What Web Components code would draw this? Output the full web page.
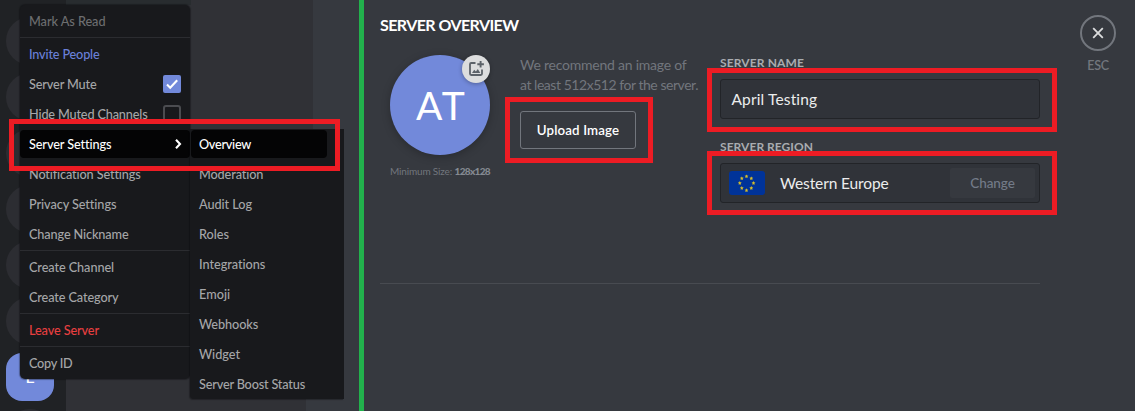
<!DOCTYPE html>
<html lang="en">
<head>
<meta charset="utf-8">
<title>Server Overview</title>
<style>
html, body { margin: 0; height: 411px; overflow: hidden; background: #36393f; font-family: Lato, "Open Sans", sans-serif; }
</style>
</head>
<body>
<server-app></server-app>
<script>
const define = (name, html, setup) => {
  const template = document.createElement('template');
  template.innerHTML = html;
  customElements.define(name, class extends HTMLElement {
    constructor() {
      super();
      this.attachShadow({ mode: 'open' }).append(template.content.cloneNode(true));
    }
    connectedCallback() { if (setup) setup(this, this.shadowRoot); }
  });
};

// A single line of text, tracked so that it fills the width given in "w".
define('fit-text', `
<style>:host{display:inline-block;white-space:nowrap;vertical-align:top}span{display:inline-block}</style>
<span><slot></slot></span>`, (el, root) => {
  const target = parseFloat(el.getAttribute('w'));
  const span = root.querySelector('span');
  span.style.letterSpacing = '0px';
  const width = span.getBoundingClientRect().width;
  if (target && width) span.style.letterSpacing = ((target - width) / el.textContent.length).toFixed(3) + 'px';
});

define('menu-row', `
<style>
:host{display:flex;flex:none;align-items:center;justify-content:space-between;box-sizing:border-box;height:28px;margin:1px 0;padding:0 9px;border-radius:4px;font-size:12.7px;font-weight:500;line-height:28px;color:#a5a6a8}
:host([muted]){color:#6d6e70}
:host([accent]){color:#6a80d8}
:host([danger]){color:#e73f40}
:host([active]){background:#040405;color:#fff}
</style>
<slot></slot><slot name="end"></slot>`);

define('menu-line', `<style>:host{display:block;flex:none;height:1px;margin:1px 0;background:#2b2c30}</style>`);

define('check-box', `
<style>
:host{display:block;width:18px;height:18px;box-sizing:border-box;border:2px solid #4b4c50;border-radius:3px}
:host([checked]){border:0;background:#7289da;border-radius:2px}
svg{display:none}
:host([checked]) svg{display:block}
</style>
<svg width="18" height="18" viewBox="0 0 18 18"><path d="M4 9.6l3.2 3.2 7-7.6" fill="none" stroke="#fff" stroke-width="2.1"/></svg>`);

define('context-menu', `
<style>
:host{display:flex;flex-direction:column;box-sizing:border-box;position:absolute;background:#18191c;box-shadow:0 0 1px 1px rgba(10,10,12,.35)}
:host([kind=main]){left:20px;top:5px;width:170px;height:374px;padding:1px 0;border-radius:5px;z-index:2}
:host([kind=sub]){left:190px;top:129px;width:154px;height:269.5px;padding:0 17px 0 1px;border-radius:0 0 0 4px;z-index:3;box-shadow:-1px 1px 1px rgba(10,10,12,.35)}
:host([kind=sub]) ::slotted(menu-row){padding-left:8px}
</style><slot></slot>`);

define('guild-rail', `
<style>
:host{display:flex;flex-direction:column;align-items:center;box-sizing:border-box;width:66px;padding:17px 6px 0 0;gap:8px;background:#202225;overflow:hidden}
i{flex:none;width:48px;height:48px;border-radius:50%;background:#2c2d32}
b{flex:none;width:48px;height:48px;border-radius:16px;background:#7289da;color:#fff;font-size:16px;font-weight:500;line-height:47px;text-align:center}
</style>
<i></i><i></i><i></i><i></i><i></i><i></i><b>E</b><i></i>`);

define('guild-side', `
<style>
:host{display:flex;position:relative;width:359px;height:411px;overflow:hidden;background:#36393f}
guild-rail{flex:none}
.channels{width:247px;display:flex;flex-direction:column;background:#303136}
.banner{width:125px;height:5px;background:#282c2f}
.chat{flex:1}
.tail{height:13px;width:7px;margin:auto 0 0 auto;background:#36393f}
.arrow{margin-right:-1px}
</style>
<guild-rail></guild-rail>
<div class="channels"><div class="banner"></div><div class="tail"></div></div>
<div class="chat"></div>
<context-menu kind="main">
<menu-row muted><fit-text w="76.5">Mark As Read</fit-text></menu-row>
<menu-line></menu-line>
<menu-row accent><fit-text w="70.5">Invite People</fit-text></menu-row>
<menu-row><fit-text w="67.5">Server Mute</fit-text><check-box slot="end" checked></check-box></menu-row>
<menu-row><fit-text w="118.5">Hide Muted Channels</fit-text><check-box slot="end"></check-box></menu-row>
<menu-row active><fit-text w="82">Server Settings</fit-text><svg class="arrow" slot="end" width="7" height="10" viewBox="0 0 7 10"><path d="M1 .8l4 4.2-4 4.2" fill="none" stroke="#fff" stroke-width="2.1"/></svg></menu-row>
<menu-row><fit-text w="111.5">Notification Settings</fit-text></menu-row>
<menu-row><fit-text w="87">Privacy Settings</fit-text></menu-row>
<menu-row><fit-text w="99.5">Change Nickname</fit-text></menu-row>
<menu-line></menu-line>
<menu-row><fit-text w="85">Create Channel</fit-text></menu-row>
<menu-row><fit-text w="89.5">Create Category</fit-text></menu-row>
<menu-line></menu-line>
<menu-row danger><fit-text w="70">Leave Server</fit-text></menu-row>
<menu-line></menu-line>
<menu-row><fit-text w="43.5">Copy ID</fit-text></menu-row>
</context-menu>
<context-menu kind="sub">
<menu-row active><fit-text w="52">Overview</fit-text></menu-row>
<menu-row><fit-text w="64.5">Moderation</fit-text></menu-row>
<menu-row><fit-text w="53">Audit Log</fit-text></menu-row>
<menu-row><fit-text w="30">Roles</fit-text></menu-row>
<menu-row><fit-text w="66.5">Integrations</fit-text></menu-row>
<menu-row><fit-text w="31.2">Emoji</fit-text></menu-row>
<menu-row><fit-text w="59.2">Webhooks</fit-text></menu-row>
<menu-row><fit-text w="41">Widget</fit-text></menu-row>
<menu-row><fit-text w="106">Server Boost Status</fit-text></menu-row>
</context-menu>`);

define('server-avatar', `
<style>
:host{display:block;width:100px}
.disc{position:relative;width:100px;height:100px;box-sizing:border-box;padding-left:3px;border-radius:50%;background:#7289da;box-shadow:0 2px 8px rgba(0,0,0,.25);color:#fff;font-size:39px;font-weight:400;line-height:100px;text-align:center}
.badge{position:absolute;right:0;top:0;width:28px;height:28px;border-radius:50%;background:#dcddde;box-shadow:0 1px 4px rgba(0,0,0,.3)}
svg{display:block}
.hint{display:flex;justify-content:space-between;margin-top:8px;font-size:10px;line-height:16px;color:#72767d;white-space:nowrap}
b{color:#858a92;font-weight:900}
</style>
<div class="disc"><fit-text w="51">AT</fit-text>
<div class="badge"><svg width="28" height="28" viewBox="0 0 28 28"><path d="M13.5 8H9.2Q8 8 8 9.2v9.6Q8 20 9.2 20h9.6q1.2 0 1.2-1.2V14.5" fill="none" stroke="#5c6269" stroke-width="1.8"/><path d="M18.6 6v6.6M15.3 9.3h6.6" stroke="#5c6269" stroke-width="1.9"/><path d="M10 18l2.2-3.2 1.7 1.7 1.9-2.5 2.5 4z" fill="#5c6269"/></svg></div></div>
<div class="hint"><fit-text w="62">Minimum Size:</fit-text><b><fit-text w="35.5">128x128</fit-text></b></div>`);

define('upload-panel', `
<style>
:host{display:block;color:#72767d;font-size:14px;line-height:20px}
button{display:flex;align-items:center;justify-content:center;box-sizing:border-box;width:116px;height:38px;margin:16px 0 0;padding:0;border:1px solid #72767d;border-radius:3px;background:none;color:#fff;font:600 13.3px/18px Lato,sans-serif}
div{height:20px}
</style>
<div><fit-text w="166.5">We recommend an image of</fit-text></div>
<div><fit-text w="178">at least 512x512 for the server.</fit-text></div>
<button><fit-text w="82.5">Upload Image</fit-text></button>`);

define('form-field', `
<style>
:host{display:block;width:320px}
.label{height:16px;line-height:16px;font-size:12px;font-weight:700;color:#a9acb0}
.box{display:flex;align-items:center;box-sizing:border-box;height:40px;margin-top:8px;border:1px solid #222428;border-radius:3px;background:#303339;color:#eceded;font-size:15.5px;line-height:38px}
</style>
<div class="label"><slot name="label"></slot></div>
<div class="box"><slot></slot></div>`);

define('eu-flag', `
<style>:host{display:block;width:36px;height:24px}svg{display:block}</style>
<svg width="36" height="24" viewBox="0 0 36 24"><rect width="36" height="24" rx="3" fill="#039"/><g fill="#d5bd2b"></g></svg>`, (el, root) => {
  const pts = [[17.5,5.3],[22.3,7.3],[24.5,12],[22.3,17],[17.5,19.2],[12.8,17],[10.8,12],[12.8,7.3]];
  root.querySelector('g').innerHTML = pts.map(([x, y]) =>
    `<path d="M${x} ${y - 1.9}l.6 1.2 1.3.2-1 .9.3 1.4-1.2-.6-1.2.6.3-1.4-1-.9 1.3-.2z"/>`).join('');
});

define('close-button', `
<style>
:host{display:flex;flex-direction:column;align-items:center;width:36px;color:#72767d;font-size:12.5px;font-weight:600;line-height:16px}
svg{display:block;margin-bottom:7px}
</style>
<svg width="36" height="36" viewBox="0 0 36 36"><circle cx="18" cy="18" r="17" fill="none" stroke="#72767d" stroke-width="2"/><path d="M13.2 13.2l9.6 9.6M22.8 13.2l-9.6 9.6" stroke="#dcddde" stroke-width="1.8"/></svg>
<fit-text w="21.5">ESC</fit-text>`);

define('server-overview', `
<style>
:host{display:flex;flex:1;align-items:flex-start;box-sizing:border-box;padding:15px 19px 0 16px;justify-content:space-between;background:#36393f}
main{width:660px}
h1{margin:0;height:20px;line-height:19px;font-size:16px;font-weight:700;color:#fff}
.cols{display:flex;align-items:flex-start;height:228px;margin-top:20px;padding-left:10px}
upload-panel{width:200px;margin-left:30px}
.fields{display:flex;flex-direction:column;gap:20px}
[slot=label]{display:block}
.name{margin-left:10.5px}
eu-flag{margin-left:8px}
.region{margin-left:15px}
.change{display:flex;align-items:center;justify-content:center;width:85px;height:30px;margin:0 4px 0 auto;border-radius:2px;background:#36393f;color:#737b88;font-size:13.5px;font-weight:500}
hr{height:1px;margin:0;border:0;background:#484b51}
close-button{flex:none}
</style>
<main>
<h1><fit-text w="138.5">SERVER OVERVIEW</fit-text></h1>
<div class="cols">
<server-avatar></server-avatar>
<upload-panel></upload-panel>
<div class="fields">
<form-field><fit-text slot="label" w="84">SERVER NAME</fit-text><fit-text class="name" w="86">April Testing</fit-text></form-field>
<form-field><fit-text slot="label" w="93">SERVER REGION</fit-text><eu-flag></eu-flag><fit-text class="region" w="108.5">Western Europe</fit-text><div class="change"><fit-text w="44.5">Change</fit-text></div></form-field>
</div>
</div>
<hr>
</main>
<close-button></close-button>`);

define('callout-box', `<style>:host{display:block;position:absolute;box-sizing:border-box;border:5px solid #ed1c24;z-index:10;left:var(--x);top:var(--y);width:var(--w);height:var(--h)}</style>`);

define('server-app', `
<style>
:host{display:flex;position:relative;width:1135px;height:411px;overflow:hidden}
guild-side{flex:none}
.divider{flex:none;width:5px;background:#22b14c}
</style>
<guild-side></guild-side><div class="divider"></div><server-overview></server-overview>
<callout-box style="--x:9px;--y:119px;--w:331px;--h:52px"></callout-box>
<callout-box style="--x:505px;--y:97px;--w:148px;--h:66px"></callout-box>
<callout-box style="--x:707px;--y:68px;--w:350px;--h:64px"></callout-box>
<callout-box style="--x:707px;--y:151px;--w:350px;--h:64px"></callout-box>`);
</script>
</body>
</html>
